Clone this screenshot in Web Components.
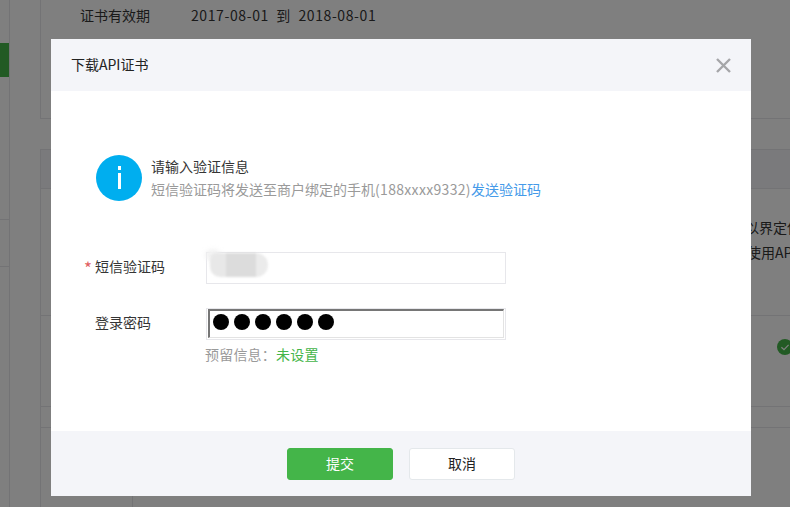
<!DOCTYPE html>
<html lang="zh-CN">
<head>
<meta charset="utf-8">
<title>下载API证书</title>
<style>
  html, body { margin: 0; height: 100%; overflow: hidden; }
  body { font: 14px "Noto Sans CJK SC", sans-serif; color: #353535; background: #fff; }
</style>
</head>
<body>
<cert-page></cert-page>
<modal-overlay>
  <cert-dialog heading="下载API证书">
    <info-tip><span slot="title">请输入验证信息</span>短信验证码将发送至商户绑定的手机<span style="letter-spacing:.32px">(188xxxx9332)</span><a slot="link">发送验证码</a></info-tip>
    <form-row label="短信验证码" required><sms-field></sms-field></form-row>
    <form-row label="登录密码"><password-field count="6"></password-field></form-row>
    <form-hint>预留信息：<b>未设置</b></form-hint>
    <wx-button slot="footer" variant="primary">提交</wx-button>
    <wx-button slot="footer">取消</wx-button>
  </cert-dialog>
</modal-overlay>

<script>
// Small helper, every element just sets its own shadow markup
class ShadowElement extends HTMLElement {
  constructor() {
    super();
    this.shadow = this.attachShadow({ mode: "open" });
  }
}

// The merchant page behind the dialog, dimmed by the overlay
class CertPage extends ShadowElement {
  connectedCallback() {
    this.shadow.innerHTML = `
      <style>
        :host { display: flex; height: 507px; overflow: hidden; --line: #e7e7eb; }
        .side { width: 9px; border-right: 1px solid var(--line); padding-top: 43px; }
        .active { height: 34px; background: #44b549; }
        .group { height: 46px; margin-top: 142px; border-top: 1px solid var(--line); border-bottom: 1px solid var(--line); }
        .gutter { width: 30px; flex: none; }
        .main { flex: 1; min-width: 0; display: flex; flex-direction: column; }
        .top { height: 114px; border-left: 1px solid var(--line); border-bottom: 1px solid var(--line); padding: 4px 0 0 39px; line-height: 22px; }
        .top span { display: inline-block; }
        .top .key { width: 111px; }
        .top .val { letter-spacing: .6px; }
        .panel { flex: 1; margin-top: 30px; border-left: 1px solid var(--line); display: flex; flex-direction: column; }
        .head { height: 38px; background: #f4f5f9; border-top: 1px solid var(--line); border-bottom: 1px solid var(--line); }
        .desc { height: 127px; line-height: 25px; box-sizing: border-box; padding-top: 26px; border-bottom: 1px solid var(--line); white-space: nowrap; }
        .desc div:nth-child(1) { padding-left: 704px; }
        .desc div:nth-child(2) { padding-left: 706px; }
        .row { height: 90px; display: flex; align-items: flex-start; justify-content: flex-end; border-bottom: 1px solid var(--line); overflow: hidden; }
        .row svg { flex: none; margin: 23px -3px 0 0; }
        .gap { height: 20px; border-bottom: 1px solid var(--line); }
        .cell { flex: 1; margin-left: 91px; border-left: 1px solid var(--line); }
      </style>
      <div class="side">
        <div class="active"></div>
        <div class="group"></div>
      </div>
      <div class="gutter"></div>
      <div class="main">
        <div class="top"><span class="key">证书有效期</span><span class="val">2017-08-01&nbsp; 到&nbsp; 2018-08-01</span></div>
        <div class="panel">
          <div class="head"></div>
          <div class="desc"><div>以界定使</div><div>使用API</div></div>
          <div class="row">
            <svg width="16" height="16" viewBox="0 0 16 16"><circle cx="8" cy="8" r="8" fill="#44b549"/><path d="M4.4 8.2l2.6 2.5 4.6-4.8" fill="none" stroke="#fff" stroke-width="1.2"/></svg>
          </div>
          <div class="gap"></div>
          <div class="cell"></div>
        </div>
      </div>`;
  }
}

// Dark layer over the page, holds the dialog in place with padding
class ModalOverlay extends ShadowElement {
  connectedCallback() {
    this.shadow.innerHTML = `
      <style>
        :host { display: block; position: fixed; inset: 0; background: rgba(0,0,0,.5); padding: 39px 39px 11px 51px; box-sizing: border-box; }
      </style>
      <slot></slot>`;
  }
}

class CertDialog extends ShadowElement {
  connectedCallback() {
    this.shadow.innerHTML = `
      <style>
        :host { display: flex; flex-direction: column; width: 700px; height: 457px; background: #fff; }
        header { height: 52px; flex: none; background: #f4f5f9; display: flex; align-items: center; justify-content: space-between; padding: 0 20px; box-sizing: border-box; color: #222; }
        header span { margin-bottom: 2px; }
        header svg { display: block; }
        main { flex: 1; padding: 64px 0 0 44px; }
        footer { height: 65px; flex: none; background: #f4f5f9; display: flex; justify-content: center; gap: 16px; padding-top: 17px; box-sizing: border-box; }
      </style>
      <header>
        <span>${this.getAttribute("heading")}</span>
        <svg width="15" height="15" viewBox="0 0 15 15"><path d="M1 1l13 13M14 1L1 14" stroke="#a5a6a9" stroke-width="2.4" fill="none"/></svg>
      </header>
      <main><slot></slot></main>
      <footer><slot name="footer"></slot></footer>`;
  }
}

class InfoTip extends ShadowElement {
  connectedCallback() {
    this.shadow.innerHTML = `
      <style>
        :host { display: flex; gap: 9px; margin-bottom: 51px; margin-left: 1px; height: 46px; }
        .icon { width: 46px; height: 46px; border-radius: 50%; background: #00aeef; flex: none; display: flex; flex-direction: column; align-items: center; padding-top: 11px; gap: 3px; box-sizing: border-box; }
        .icon i { display: block; width: 3px; background: #fff; }
        .icon i:first-child { height: 4px; }
        .icon i:last-child { height: 16px; }
        .text { display: flex; flex-direction: column; gap: 3px; line-height: 20px; padding-top: 1px; color: #9a9a9a; white-space: nowrap; }
        ::slotted([slot=title]) { color: #353535; }
        ::slotted([slot=link]) { color: #459ae9; }
      </style>
      <div class="icon"><i></i><i></i></div>
      <div class="text">
        <div><slot name="title"></slot></div>
        <div><slot></slot><slot name="link"></slot></div>
      </div>`;
  }
}

class FormRow extends ShadowElement {
  connectedCallback() {
    const star = this.hasAttribute("required") ? `<span class="star">*</span>` : "";
    this.shadow.innerHTML = `
      <style>
        :host { display: flex; align-items: center; height: 32px; margin-bottom: 24px; }
        label { width: 111px; flex: none; position: relative; line-height: 20px; margin-bottom: 4px; color: #353535; }
        .star { position: absolute; left: -11px; top: 2px; font-size: 17px; color: #e15f63; }
      </style>
      <label>${star}${this.getAttribute("label")}</label>
      <slot></slot>`;
  }
}

// Empty code box, with the pixelated smear that hides the typed code
class SmsField extends ShadowElement {
  connectedCallback() {
    this.shadow.innerHTML = `
      <style>
        :host { display: block; position: relative; width: 300px; height: 32px; box-sizing: border-box; border: 1px solid #e7e7eb; }
        .smear { position: absolute; left: 3px; top: 0; width: 58px; height: 24px; display: flex; filter: blur(1px); border-radius: 8px 14px 14px 12px; overflow: hidden; }
        .smear i { display: block; height: 100%; }
        .puff { position: absolute; left: -2px; top: -4px; width: 16px; height: 12px; background: #f2f2f2; border-radius: 50%; filter: blur(2px); }
      </style>
      <div class="puff"></div>
      <div class="smear">
        <i style="width:16px;background:#e8e8e8"></i>
        <i style="width:30px;background:#dcdcdc"></i>
        <i style="width:12px;background:#ebebeb"></i>
      </div>`;
  }
}

// Password box: focused inset input inside the light frame, dots as circles
class PasswordField extends ShadowElement {
  connectedCallback() {
    const dots = "<i></i>".repeat(Number(this.getAttribute("count")));
    this.shadow.innerHTML = `
      <style>
        :host { display: block; width: 300px; height: 32px; box-sizing: border-box; border: 1px solid #e7e7eb; padding: 0 1px 1px 1px; }
        .inner { height: 100%; box-sizing: border-box; border-style: solid; border-width: 2px 1px 1px 2px; border-color: #767676 #e3e3e3 #e3e3e3 #767676; display: flex; align-items: center; gap: 5px; padding: 0 0 4px 3px; }
        i { display: block; width: 16px; height: 16px; border-radius: 50%; background: #000; }
      </style>
      <div class="inner">${dots}</div>`;
  }
}

class FormHint extends ShadowElement {
  connectedCallback() {
    this.shadow.innerHTML = `
      <style>
        :host { display: block; margin: -20px 0 0 110px; line-height: 20px; letter-spacing: .2px; color: #9a9a9a; }
        ::slotted(b) { font-weight: normal; color: #44b549; }
      </style>
      <slot></slot>`;
  }
}

class WxButton extends ShadowElement {
  connectedCallback() {
    const primary = this.getAttribute("variant") === "primary";
    this.shadow.innerHTML = `
      <style>
        :host { display: block; width: 106px; height: 32px; box-sizing: border-box; border-radius: 3px; text-align: center; line-height: 28px;
          border: 1px solid ${primary ? "#44b549" : "#e4e8eb"};
          background: ${primary ? "#44b549" : "#fff"};
          color: ${primary ? "#fff" : "#222"}; }
      </style>
      <slot></slot>`;
  }
}

customElements.define("cert-page", CertPage);
customElements.define("modal-overlay", ModalOverlay);
customElements.define("cert-dialog", CertDialog);
customElements.define("info-tip", InfoTip);
customElements.define("form-row", FormRow);
customElements.define("sms-field", SmsField);
customElements.define("password-field", PasswordField);
customElements.define("form-hint", FormHint);
customElements.define("wx-button", WxButton);
</script>
</body>
</html>
